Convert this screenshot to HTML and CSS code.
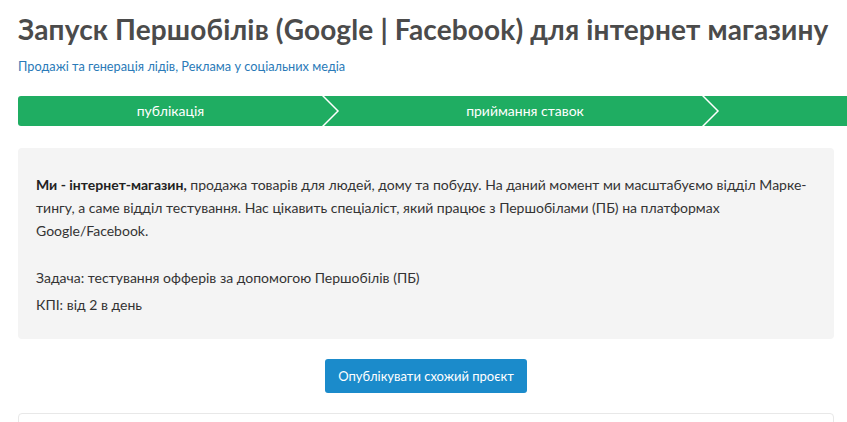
FILE: index.html
```html
<!DOCTYPE html>
<html lang="uk">
<head>
    <meta charset="UTF-8">
    <meta name="viewport" content="width=device-width, initial-scale=1.0">
    <title>Запуск Першобілів</title>
    <link rel="stylesheet" href="styles.css">
</head>
<body>
    <div class="page">
        <h1 class="title">Запуск Першобілів (Google | Facebook) для інтернет магазину</h1>
        <div class="cats"><a href="#">Продажі та генерація лідів</a>, <a href="#">Реклама у соціальних медіа</a></div>

        <div class="steps">
            <div class="step step-first">
                публікація
                <svg class="chev" width="18" height="32" viewBox="0 0 18 32"><polyline points="0,0 16,16 0,32" fill="none" stroke="#fff" stroke-width="1.5"/></svg>
            </div>
            <div class="step step-second">
                приймання ставок
                <svg class="chev" width="18" height="32" viewBox="0 0 18 32"><polyline points="0,0 16,16 0,32" fill="none" stroke="#fff" stroke-width="1.5"/></svg>
            </div>
            <div class="step step-rest"></div>
        </div>

        <div class="descr">
            <p><b>Ми - інтернет-магазин,</b> продажа товарів для людей, дому та побуду. На даний момент ми масштабуємо відділ Марке&shy;тингу, а саме відділ тестування. Нас цікавить спеціаліст, який працює з Першобілами (ПБ) на платформах Google/Facebook.</p>
            <p class="task">Задача: тестування офферів за допомогою Першобілів (ПБ)</p>
            <p class="kpi">КПІ: від 2 в день</p>
        </div>

        <div class="actions">
            <button class="btn">Опублікувати схожий проєкт</button>
        </div>

        <div class="next-card"></div>
    </div>
</body>
</html>
```

FILE: styles.css
```css
body {
    margin: 0;
    background: #fff;
    font-family: Lato, "Liberation Sans", sans-serif;
    color: #333;
    overflow: hidden;
}
.page {
    padding: 0 13px 0 18px;
}
.title {
    margin: 0;
    padding-top: 12px;
    font-size: 28px;
    line-height: 34px;
    font-weight: bold;
    letter-spacing: 0.15px;
    color: #4b4b4b;
    white-space: nowrap;
}
.cats {
    margin-top: 12px;
    font-size: 12.75px;
    line-height: 16px;
    color: #2a7ab8;
}
.cats a {
    color: #2a7ab8;
    text-decoration: none;
}

/* steps bar */
.steps {
    display: flex;
    margin-top: 22px;
    margin-right: -13px;
    height: 30px;
    background: #1fad62;
    border-radius: 3px 0 0 3px;
    color: #fff;
    font-size: 14px;
    line-height: 30px;
}
.step {
    position: relative;
    text-align: center;
}
.step-first {
    width: 305px;
}
.step-second {
    width: 356px;
    padding-left: 24px;
}
.step-rest {
    flex: 1;
}
.chev {
    position: absolute;
    right: -17px;
    top: -1px;
}

/* description */
.descr {
    margin-top: 22px;
    background: #f4f4f4;
    border-radius: 4px;
    padding: 25px 18px 23px;
    font-size: 14px;
    line-height: 23px;
    color: #333;
}
.descr p {
    margin: 0;
}
.descr b {
    color: #222;
}
.descr .task {
    margin-top: 24px;
}
.descr .kpi {
    margin-top: 4px;
}

.actions {
    text-align: center;
    padding: 20px 0;
}
.btn {
    background: #1b8bcb;
    color: #fff;
    border: none;
    border-radius: 3px;
    font-family: inherit;
    font-size: 13px;
    height: 34px;
    padding: 0 13px;
    vertical-align: top;
    cursor: pointer;
}
.btn:hover {
    background: #1679b3;
}

.next-card {
    height: 60px;
    border: 1px solid #e8e8e8;
    border-radius: 4px;
}
```
